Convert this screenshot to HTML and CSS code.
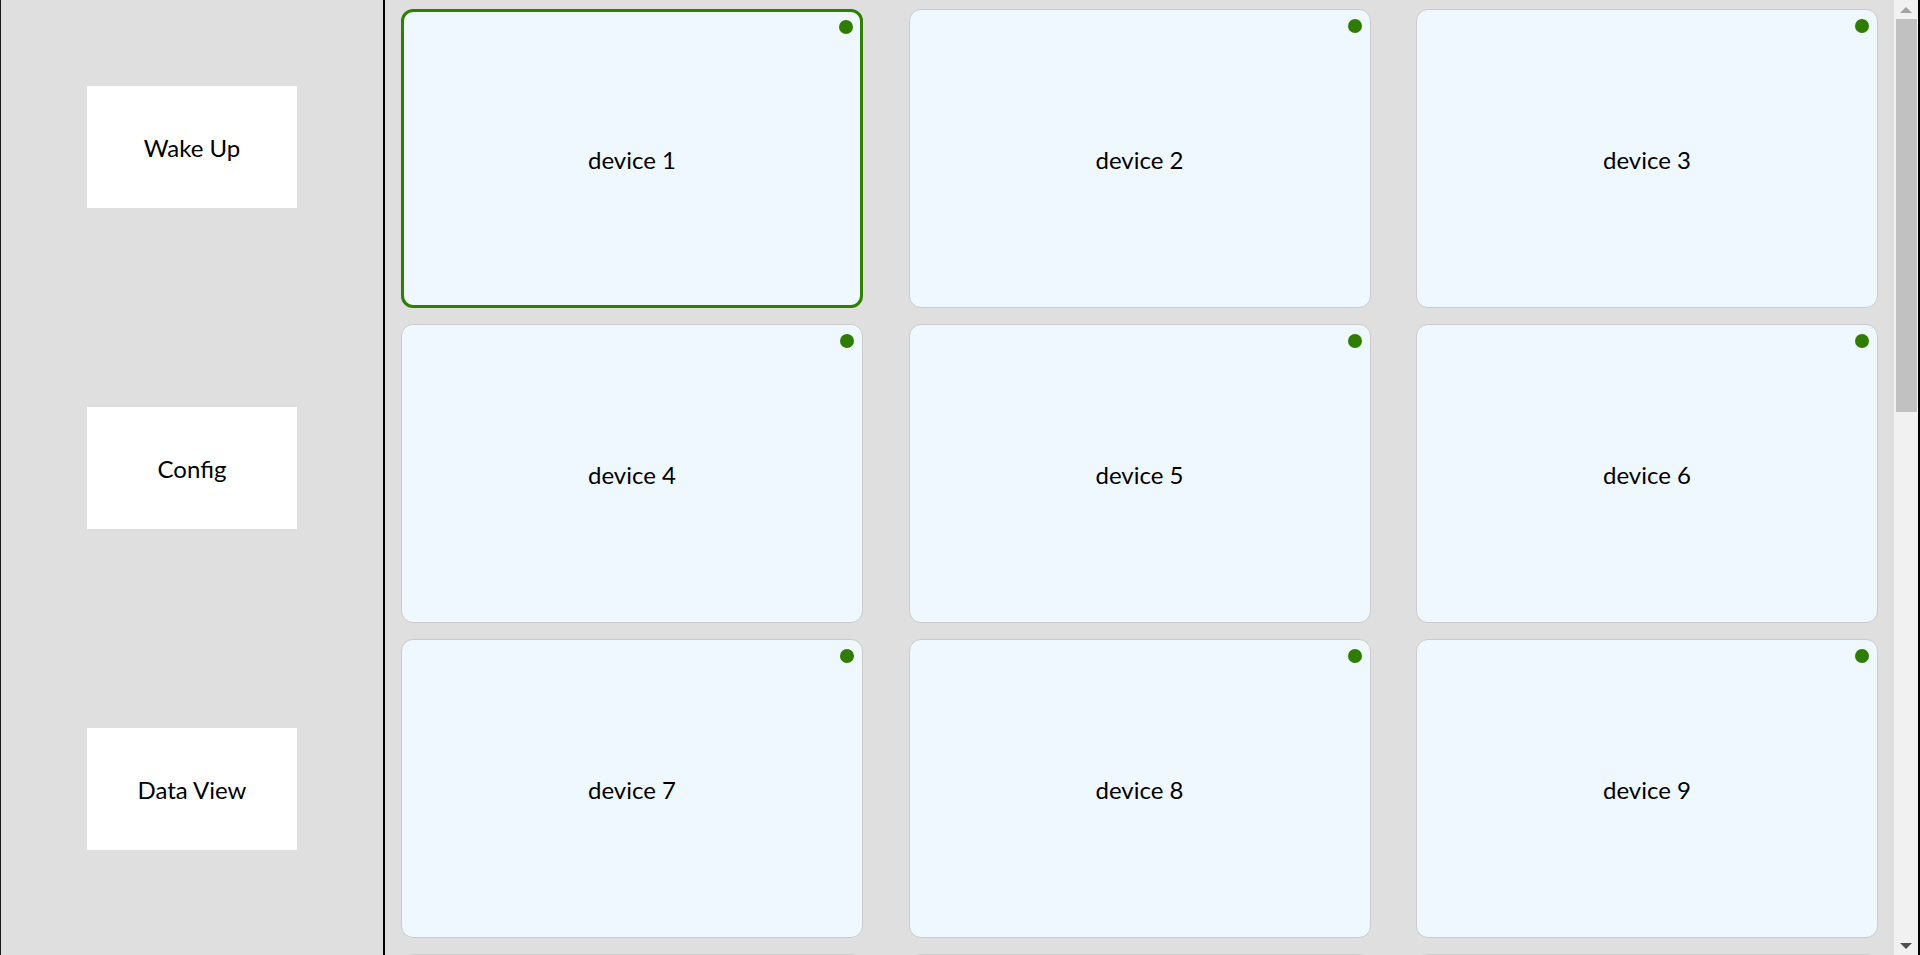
FILE: index.html
```html
<!DOCTYPE html>
<html lang="en">
<head>
<meta charset="utf-8">
<title>Devices</title>
<link rel="stylesheet" href="styles.css">
</head>
<body>
<div class="app">
  <nav class="sidebar">
    <button class="side-btn">Wake Up</button>
    <button class="side-btn">Config</button>
    <button class="side-btn">Data View</button>
  </nav>
  <main class="pane">
    <div class="viewport">
      <div class="grid">
        <div class="card selected"><span class="dot"></span><span class="label">device 1</span></div>
        <div class="card"><span class="dot"></span><span class="label">device 2</span></div>
        <div class="card"><span class="dot"></span><span class="label">device 3</span></div>
        <div class="card"><span class="dot"></span><span class="label">device 4</span></div>
        <div class="card"><span class="dot"></span><span class="label">device 5</span></div>
        <div class="card"><span class="dot"></span><span class="label">device 6</span></div>
        <div class="card"><span class="dot"></span><span class="label">device 7</span></div>
        <div class="card"><span class="dot"></span><span class="label">device 8</span></div>
        <div class="card"><span class="dot"></span><span class="label">device 9</span></div>
        <div class="card"><span class="dot"></span></div>
        <div class="card"><span class="dot"></span></div>
        <div class="card"><span class="dot"></span></div>
      </div>
    </div>
    <div class="scrollbar" aria-hidden="true">
      <div class="sb-btn"><span class="arrow-up"></span></div>
      <div class="sb-track">
        <div class="sb-thumb"></div>
      </div>
      <div class="sb-btn"><span class="arrow-down"></span></div>
    </div>
  </main>
</div>
</body>
</html>
```
FILE: styles.css
```css
html, body {
  margin: 0;
  padding: 0;
  height: 100%;
  overflow: hidden;
}

body {
  font-family: Lato, "Liberation Sans", sans-serif;
  color: #000;
  background: #dfdfdf;
}

.app {
  display: flex;
  height: 100vh;
  box-sizing: border-box;
  border-left: 1px solid #1a1a1a;
  border-right: 2px solid #000;
}

.sidebar {
  width: 382px;
  flex: none;
  background: #dfdfdf;
  border-right: 2px solid #000;
  display: flex;
  flex-direction: column;
  align-items: center;
  padding-top: 86px;
  gap: 199px;
}

.side-btn {
  width: 210px;
  height: 122px;
  background: #fff;
  border: none;
  padding: 0;
  font-family: Lato, "Liberation Sans", sans-serif;
  font-size: 24px;
  color: #000;
  cursor: pointer;
}

.pane {
  flex: 1;
  min-width: 0;
  height: 100%;
  display: flex;
  background: #dfdfdf;
}

.viewport {
  flex: 1;
  min-width: 0;
  height: 100%;
  overflow: hidden;
}

.grid {
  display: grid;
  grid-template-columns: repeat(3, 462px);
  grid-auto-rows: 299px;
  justify-content: space-between;
  row-gap: 16px;
  padding: 9px 16px;
}

.card {
  position: relative;
  box-sizing: border-box;
  background: #f0f8ff;
  border: 1px solid #cbcbcb;
  border-radius: 12px;
  display: flex;
  align-items: center;
  justify-content: center;
}

.card.selected {
  border: 3px solid #2e8000;
}

.label {
  font-size: 24px;
  line-height: 1;
  padding-top: 2px;
}

.dot {
  position: absolute;
  top: 9px;
  right: 8px;
  width: 14px;
  height: 14px;
  border-radius: 50%;
  background: #2e7d00;
}

.card.selected .dot {
  top: 8px;
  right: 7px;
}

.scrollbar {
  width: 24px;
  flex: none;
  height: 100%;
  display: flex;
  flex-direction: column;
  background: #f1f1f1;
}

.sb-btn {
  height: 19px;
  flex: none;
  display: flex;
  align-items: center;
  justify-content: center;
}

.arrow-up {
  width: 0;
  height: 0;
  border-left: 6px solid transparent;
  border-right: 6px solid transparent;
  border-bottom: 6px solid #a3a3a3;
}

.arrow-down {
  width: 0;
  height: 0;
  border-left: 6px solid transparent;
  border-right: 6px solid transparent;
  border-top: 6px solid #505050;
}

.sb-track {
  flex: 1;
  padding: 0 1px 0 2px;
}

.sb-thumb {
  height: 393px;
  background: #c1c1c1;
}
```
